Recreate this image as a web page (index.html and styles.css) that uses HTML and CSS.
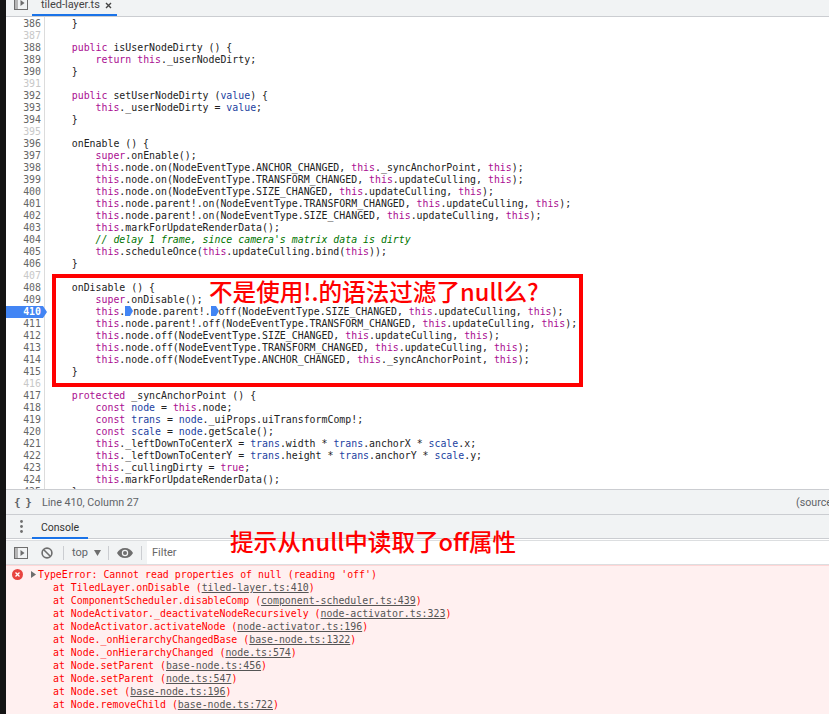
FILE: index.html
```html
<!DOCTYPE html>
<html lang="en">
<head>
<meta charset="utf-8">
<title>tiled-layer.ts</title>
<link rel="stylesheet" href="styles.css">
</head>
<body>
<div class="app">
  <div class="strip"></div>
  <div class="main">
    <div class="tabbar">
      <svg class="tool-icon clipped" width="14" height="14" viewBox="0 0 14 14"><rect x="0.5" y="0.5" width="13" height="13" fill="none" stroke="#6e6e6e"/><rect x="1" y="1" width="3" height="12" fill="#b5b5b5"/><path d="M6.5 4l4 3-4 3z" fill="#6e6e6e"/></svg>
      <div class="file-tab">tiled-layer.ts<svg class="close" width="7" height="7" viewBox="0 0 7 7"><path d="M1 1l5 5M6 1l-5 5" stroke="#444" stroke-width="1.4"/></svg></div>
    </div>
    <div class="editor">
<div class="row"><span class="num">386</span><span class="code">    }</span></div>
<div class="row"><span class="num faded">387</span><span class="code"></span></div>
<div class="row"><span class="num">388</span><span class="code">    <b>public</b> isUserNodeDirty () {</span></div>
<div class="row"><span class="num">389</span><span class="code">        <b>return</b> <b>this</b>._userNodeDirty;</span></div>
<div class="row"><span class="num">390</span><span class="code">    }</span></div>
<div class="row"><span class="num faded">391</span><span class="code"></span></div>
<div class="row"><span class="num">392</span><span class="code">    <b>public</b> setUserNodeDirty (<i class="var">value</i>) {</span></div>
<div class="row"><span class="num">393</span><span class="code">        <b>this</b>._userNodeDirty = <i class="var">value</i>;</span></div>
<div class="row"><span class="num">394</span><span class="code">    }</span></div>
<div class="row"><span class="num faded">395</span><span class="code"></span></div>
<div class="row"><span class="num">396</span><span class="code">    onEnable () {</span></div>
<div class="row"><span class="num">397</span><span class="code">        <b>super</b>.onEnable();</span></div>
<div class="row"><span class="num">398</span><span class="code">        <b>this</b>.node.on(NodeEventType.ANCHOR_CHANGED, <b>this</b>._syncAnchorPoint, <b>this</b>);</span></div>
<div class="row"><span class="num">399</span><span class="code">        <b>this</b>.node.on(NodeEventType.TRANSFORM_CHANGED, <b>this</b>.updateCulling, <b>this</b>);</span></div>
<div class="row"><span class="num">400</span><span class="code">        <b>this</b>.node.on(NodeEventType.SIZE_CHANGED, <b>this</b>.updateCulling, <b>this</b>);</span></div>
<div class="row"><span class="num">401</span><span class="code">        <b>this</b>.node.parent!.on(NodeEventType.TRANSFORM_CHANGED, <b>this</b>.updateCulling, <b>this</b>);</span></div>
<div class="row"><span class="num">402</span><span class="code">        <b>this</b>.node.parent!.on(NodeEventType.SIZE_CHANGED, <b>this</b>.updateCulling, <b>this</b>);</span></div>
<div class="row"><span class="num">403</span><span class="code">        <b>this</b>.markForUpdateRenderData();</span></div>
<div class="row"><span class="num">404</span><span class="code">        <em>// delay 1 frame, since camera's matrix data is dirty</em></span></div>
<div class="row"><span class="num">405</span><span class="code">        <b>this</b>.scheduleOnce(<b>this</b>.updateCulling.bind(<b>this</b>));</span></div>
<div class="row"><span class="num">406</span><span class="code">    }</span></div>
<div class="row"><span class="num faded">407</span><span class="code"></span></div>
<div class="row"><span class="num">408</span><span class="code">    onDisable () {</span></div>
<div class="row"><span class="num">409</span><span class="code">        <b>super</b>.onDisable();</span></div>
<div class="row"><span class="num current">410</span><span class="code">        <b>this</b>.<svg class="marker" width="8" height="10" viewBox="0 0 8 10"><path d="M0 0h5l3 5-3 5H0z" fill="#4285f4"/></svg>node.parent!.<svg class="marker" width="8" height="10" viewBox="0 0 8 10"><path d="M0 0h5l3 5-3 5H0z" fill="#4285f4"/></svg>off(NodeEventType.SIZE_CHANGED, <b>this</b>.updateCulling, <b>this</b>);</span></div>
<div class="row"><span class="num">411</span><span class="code">        <b>this</b>.node.parent!.off(NodeEventType.TRANSFORM_CHANGED, <b>this</b>.updateCulling, <b>this</b>);</span></div>
<div class="row"><span class="num">412</span><span class="code">        <b>this</b>.node.off(NodeEventType.SIZE_CHANGED, <b>this</b>.updateCulling, <b>this</b>);</span></div>
<div class="row"><span class="num">413</span><span class="code">        <b>this</b>.node.off(NodeEventType.TRANSFORM_CHANGED, <b>this</b>.updateCulling, <b>this</b>);</span></div>
<div class="row"><span class="num">414</span><span class="code">        <b>this</b>.node.off(NodeEventType.ANCHOR_CHANGED, <b>this</b>._syncAnchorPoint, <b>this</b>);</span></div>
<div class="row"><span class="num">415</span><span class="code">    }</span></div>
<div class="row"><span class="num faded">416</span><span class="code"></span></div>
<div class="row"><span class="num">417</span><span class="code">    <b>protected</b> _syncAnchorPoint () {</span></div>
<div class="row"><span class="num">418</span><span class="code">        <b>const</b> <i class="var">node</i> = <b>this</b>.node;</span></div>
<div class="row"><span class="num">419</span><span class="code">        <b>const</b> <i class="var">trans</i> = <i class="var">node</i>._uiProps.uiTransformComp!;</span></div>
<div class="row"><span class="num">420</span><span class="code">        <b>const</b> <i class="var">scale</i> = <i class="var">node</i>.getScale();</span></div>
<div class="row"><span class="num">421</span><span class="code">        <b>this</b>._leftDownToCenterX = <i class="var">trans</i>.width * <i class="var">trans</i>.anchorX * <i class="var">scale</i>.x;</span></div>
<div class="row"><span class="num">422</span><span class="code">        <b>this</b>._leftDownToCenterY = <i class="var">trans</i>.height * <i class="var">trans</i>.anchorY * <i class="var">scale</i>.y;</span></div>
<div class="row"><span class="num">423</span><span class="code">        <b>this</b>._cullingDirty = <b>true</b>;</span></div>
<div class="row"><span class="num">424</span><span class="code">        <b>this</b>.markForUpdateRenderData();</span></div>
<div class="row"><span class="num">425</span><span class="code">    }</span></div>
      <div class="gutter-line"></div>
    </div>
    <div class="statusbar">
      <span class="braces">{ }</span>
      <span class="pos">Line 410, Column 27</span>
      <span class="source">(source</span>
    </div>
    <div class="drawer-tabs">
      <svg class="dots" width="3" height="13" viewBox="0 0 3 13"><circle cx="1.500" cy="1.500" r="1.400" fill="#6e6e6e"/><circle cx="1.500" cy="6.500" r="1.400" fill="#6e6e6e"/><circle cx="1.500" cy="11.500" r="1.400" fill="#6e6e6e"/></svg>
      <div class="console-tab">Console</div>
    </div>
    <div class="toolbar">
      <svg class="tool-icon" width="14" height="12" viewBox="0 0 14 12"><rect x="0.5" y="0.5" width="13" height="11" fill="none" stroke="#6e6e6e"/><rect x="1" y="1" width="3" height="10" fill="#b5b5b5"/><path d="M6.500 3l4 3-4 3z" fill="#6e6e6e"/></svg>
      <svg class="block-icon" width="12" height="12" viewBox="0 0 12 12"><circle cx="6" cy="6" r="4.900" fill="none" stroke="#6e6e6e" stroke-width="1.600"/><path d="M2.500 2.500l7 7" stroke="#6e6e6e" stroke-width="1.600"/></svg>
      <span class="sep"></span>
      <span class="context">top</span>
      <svg class="caret" width="7" height="6" viewBox="0 0 7 6"><path d="M0 0h7L3.500 6z" fill="#6e6e6e"/></svg>
      <span class="sep"></span>
      <svg class="eye" width="16" height="10" viewBox="0 0 16 10"><path d="M8 0C4.500 0 1.500 2 0 5c1.500 3 4.500 5 8 5s6.500-2 8-5c-1.500-3-4.500-5-8-5z" fill="#6e6e6e"/><circle cx="8" cy="5" r="3.200" fill="#f1f3f4"/><circle cx="8" cy="5" r="2" fill="#6e6e6e"/></svg>
      <span class="sep"></span>
      <div class="filter">Filter</div>
    </div>
    <div class="console">
      <div class="err-head">
        <svg class="err-icon" width="11" height="11" viewBox="0 0 11 11"><circle cx="5.500" cy="5.500" r="5.500" fill="#e8433f"/><path d="M3.500 3.500l4 4M7.500 3.500l-4 4" stroke="#fff" stroke-width="1.300"/></svg>
        <svg class="err-tri" width="5" height="7" viewBox="0 0 5 7"><path d="M0 0l5 3.500L0 7z" fill="#6e6e6e"/></svg>
        <div class="err-msg">TypeError: Cannot read properties of null (reading 'off')</div>
      </div>
      <div class="stack">at TiledLayer.onDisable (<a>tiled-layer.ts:410</a>)</div>
      <div class="stack">at ComponentScheduler.disableComp (<a>component-scheduler.ts:439</a>)</div>
      <div class="stack">at NodeActivator._deactivateNodeRecursively (<a>node-activator.ts:323</a>)</div>
      <div class="stack">at NodeActivator.activateNode (<a>node-activator.ts:196</a>)</div>
      <div class="stack">at Node._onHierarchyChangedBase (<a>base-node.ts:1322</a>)</div>
      <div class="stack">at Node._onHierarchyChanged (<a>node.ts:574</a>)</div>
      <div class="stack">at Node.setParent (<a>base-node.ts:456</a>)</div>
      <div class="stack">at Node.setParent (<a>node.ts:547</a>)</div>
      <div class="stack">at Node.set (<a>base-node.ts:196</a>)</div>
      <div class="stack">at Node.removeChild (<a>base-node.ts:722</a>)</div>
    </div>
  </div>
  <div class="redbox"></div>
  <div class="note note-top">不是使用!.的语法过滤了null么?</div>
  <div class="note note-bottom">提示从null中读取了off属性</div>
</div>
</body>
</html>
```
FILE: styles.css
```css
html, body { margin: 0; padding: 0; }
body { width: 829px; height: 714px; overflow: hidden; background: #fff; }
.app { position: relative; display: flex; width: 829px; height: 714px; overflow: hidden; font-family: Roboto, "Open Sans", sans-serif; }
.strip { width: 6px; flex: none; background: #141414; }
.main { flex: 1; min-width: 0; display: flex; flex-direction: column; }

.tabbar { height: 17px; flex: none; box-sizing: border-box; display: flex; background: #f1f3f4; border-bottom: 1px solid #cbcdd1; overflow: hidden; }
.clipped { margin: -4px 0 0 8px; }
.file-tab { margin-left: 4px; width: 85px; height: 16px; box-sizing: border-box; padding: 0 0 0 9px; border-bottom: 2px solid #1a73e8; font-size: 11px; line-height: 10px; color: #444; white-space: nowrap; position: relative; }
.close { position: absolute; left: 73px; top: 2px; }

.editor { position: relative; height: 472px; flex: none; box-sizing: border-box; padding-top: 1px; overflow: hidden; background: #fff; font-family: "DejaVu Sans Mono", monospace; font-size: 9.9px; color: #222; }
.row { display: flex; height: 12px; line-height: 12px; white-space: pre; }
.num { width: 35px; flex: none; box-sizing: border-box; text-align: right; color: #666; }
.num.faded { color: #c8c8c8; }
.num.current { color: #fff; font-weight: bold; background: #4285f4; width: 41px; padding-right: 6px; margin-right: -6px; clip-path: polygon(0 0, 37px 0, 41px 50%, 37px 100%, 0 100%); position: relative; z-index: 1; }
.code { margin-left: 7px; }
.code b { font-weight: normal; color: #aa0d91; }
.code em { font-style: italic; color: #007400; }
.code i.var { font-style: normal; color: #1c3f9f; }
.marker { display: inline-block; vertical-align: -1px; }
.gutter-line { position: absolute; left: 38px; top: 0; bottom: 0; width: 1px; background: #dcdcdc; }

.statusbar { height: 26px; flex: none; box-sizing: border-box; display: flex; align-items: center; background: #f1f3f4; border-top: 1px solid #cbcdd1; border-bottom: 1px solid #cbcdd1; font-size: 10.7px; color: #5f6368; }
.braces { width: 36px; box-sizing: border-box; padding-left: 8px; font-family: "DejaVu Sans Mono", monospace; font-size: 11px; font-weight: bold; letter-spacing: -1px; }
.pos { flex: 1; }
.source { margin-right: -8px; width: 41px; overflow: hidden; white-space: nowrap; }

.drawer-tabs { height: 24px; flex: none; box-sizing: border-box; display: flex; align-items: center; background: #f1f3f4; border-bottom: 1px solid #cbcdd1; }
.dots { margin-left: 14px; }
.console-tab { margin-left: 9px; width: 56px; height: 24px; box-sizing: border-box; text-align: center; font-size: 10.5px; line-height: 25px; color: #333; border-bottom: 2px solid #1a73e8; }

.toolbar { height: 25px; flex: none; box-sizing: border-box; display: flex; align-items: center; margin-top: 1px; background: #f1f3f4; border-top: 1px solid #dcdee0; border-bottom: 1px solid #dcdee0; font-size: 11px; color: #5f6368; }
.tool-icon { flex: none; }
.toolbar .tool-icon { margin-left: 8px; }
.block-icon { margin-left: 13px; }
.sep { width: 1px; height: 14px; background: #cbcdd1; flex: none; }
.toolbar .block-icon + .sep { margin-left: 10px; }
.context { margin-left: 8px; }
.caret { margin: 0 7px 0 6px; }
.eye { margin: 0 8px; }
.filter { flex: 1; align-self: stretch; margin-left: 5px; padding-left: 5px; background: #fff; line-height: 23px; color: #666; }

.console { flex: 1; min-height: 0; box-sizing: border-box; background: #fff0f0; border-top: 1px solid #ffd6d6; padding-top: 2px; font-family: "DejaVu Sans Mono", monospace; font-size: 9.9px; color: #f00; overflow: hidden; }
.err-head { position: relative; height: 13px; }
.err-msg { margin-left: 32px; line-height: 13px; white-space: pre; }
.err-icon { position: absolute; left: 6px; top: 1px; }
.err-tri { position: absolute; left: 25px; top: 3px; }
.stack { height: 13px; line-height: 13px; padding-left: 47px; white-space: pre; }
.stack a { color: #555; text-decoration: underline; }

.redbox { position: absolute; left: 52px; top: 274px; width: 531px; height: 113px; box-sizing: border-box; border: 4px solid #f00; }
.note { position: absolute; font-family: "Noto Sans CJK SC", sans-serif; font-weight: 500; font-size: 23.6px; line-height: 28px; color: #f00; white-space: nowrap; }
.note-top { left: 209px; top: 277px; }
.note-bottom { left: 230px; top: 527px; }
```
